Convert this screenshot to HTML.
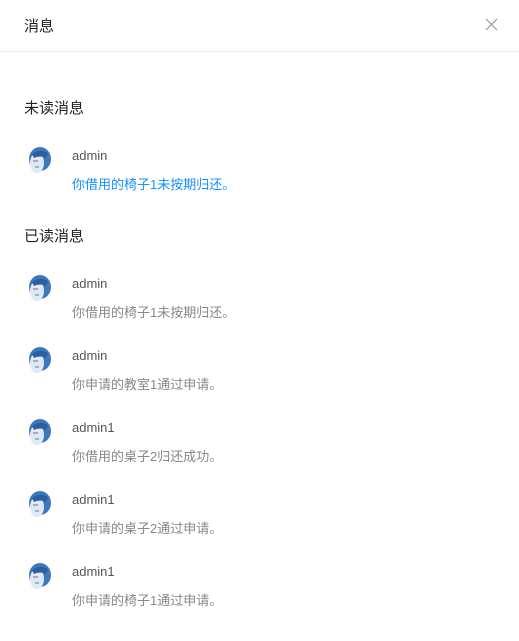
<!DOCTYPE html>
<html><head><meta charset="utf-8"><style>
body{margin:0;width:519px;height:641px;background:#fff;font-family:"Liberation Sans","Noto Sans CJK SC",sans-serif;position:relative;overflow:hidden}
.t{position:absolute;white-space:nowrap}
.hd{position:absolute;left:0;top:0;width:519px;height:51px;border-bottom:1px solid #e8e8e8}
.sec{font-size:15px;color:#222;left:24px}
.name{left:72px;font-size:13px;color:#555}
.msg{left:72px;font-size:13px;color:#888}
.av{position:absolute;left:26px;width:26px;height:30px}
</style></head><body>
<div class="hd"></div>
<div class="t" style="left:24px;top:15px;font-size:15px;color:#222">消息</div>
<svg style="position:absolute;left:485px;top:18px" width="13" height="13"><path d="M1 1L12 12M12 1L1 12" stroke="#999" stroke-width="1.2"/></svg>
<div class="t sec" style="top:97px">未读消息</div>
<div class="t sec" style="top:225px">已读消息</div>
<svg width="0" height="0" style="position:absolute"><defs><g id="a">
<ellipse cx="14" cy="13" rx="11" ry="12" fill="#3d78bf"/>
<ellipse cx="11" cy="17" rx="7" ry="10" fill="#dfe8f3"/>
<path d="M6 8 Q13 2 22 7 L20 12 Q14 9 8 12Z" fill="#2a5f9f"/>
<path d="M7 15 h5 M9 21 h4" stroke="#6b8fbd" stroke-width="1.2"/>
</g></defs></svg>
<svg class="av" style="top:146px"><use href="#a"/></svg>
<svg class="av" style="top:274px"><use href="#a"/></svg>
<svg class="av" style="top:346px"><use href="#a"/></svg>
<svg class="av" style="top:418px"><use href="#a"/></svg>
<svg class="av" style="top:490px"><use href="#a"/></svg>
<svg class="av" style="top:562px"><use href="#a"/></svg>
<div class="t name" style="top:148px">admin</div>
<div class="t msg" style="top:174px;color:#1890ff">你借用的椅子1未按期归还。</div>
<div class="t name" style="top:276px">admin</div>
<div class="t msg" style="top:302px">你借用的椅子1未按期归还。</div>
<div class="t name" style="top:348px">admin</div>
<div class="t msg" style="top:374px">你申请的教室1通过申请。</div>
<div class="t name" style="top:420px">admin1</div>
<div class="t msg" style="top:446px">你借用的桌子2归还成功。</div>
<div class="t name" style="top:492px">admin1</div>
<div class="t msg" style="top:518px">你申请的桌子2通过申请。</div>
<div class="t name" style="top:564px">admin1</div>
<div class="t msg" style="top:590px">你申请的椅子1通过申请。</div>
</body></html>
